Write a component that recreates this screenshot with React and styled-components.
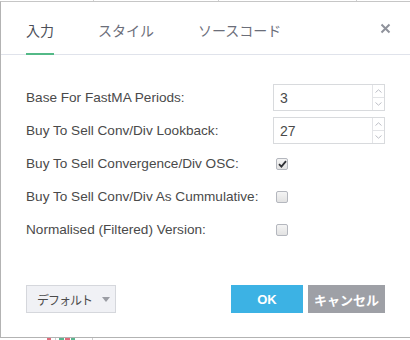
import React from 'react'
import styled, { createGlobalStyle } from 'styled-components'

const Global = createGlobalStyle`
  html, body {
    margin: 0;
    padding: 0;
    background: #fff;
    overflow: hidden;
  }
  body {
    font-family: "Liberation Sans", "Noto Sans CJK JP", sans-serif;
    color: #4a4a4a;
  }
`

const Page = styled.div`
  width: 410px;
  height: 340px;
  display: flex;
  flex-direction: column;
`

const Strip = styled.div`
  height: ${({ h }) => h}px;
  flex-shrink: 0;
  display: flex;
  align-items: stretch;
`

const Tick = styled.span`
  width: ${({ w }) => w || 1}px;
  margin-left: ${({ at }) => at}px;
  background: ${({ colour }) => colour};
`

const Dialog = styled.div`
  height: 338px;
  box-sizing: border-box;
  border-top: 1px solid #c6c6c6;
  border-left: 1px solid #b3b3b3;
  border-bottom: 1px solid #b3b3b3;
  display: flex;
  flex-direction: column;
`

const Header = styled.div`
  height: 52px;
  flex-shrink: 0;
  display: flex;
  align-items: stretch;
  padding: 0 19px 0 25px;
  border-bottom: 1px solid #e0e3eb;
`

const Tab = styled.div`
  position: relative;
  display: flex;
  align-items: center;
  padding-top: 3px;
  margin-right: 44px;
  font-family: "Noto Sans CJK JP", sans-serif;
  font-size: 14px;
  color: ${({ active }) => (active ? '#4c4f59' : '#6b6e79')};
  &::after {
    content: '';
    display: ${({ active }) => (active ? 'block' : 'none')};
    position: absolute;
    left: 0;
    right: 0;
    bottom: -1px;
    height: 2px;
    background: #53b987;
  }
`

const Close = styled.div`
  margin-left: auto;
  display: flex;
  align-items: center;
  padding-top: 1px;
`

const Body = styled.div`
  display: grid;
  grid-template-columns: 247px 112px;
  grid-auto-rows: 27px;
  row-gap: 6px;
  padding: 29px 25px 0 25px;
`

const Label = styled.div`
  display: flex;
  align-items: center;
  font-size: 13.6px;
  color: #4a4a4a;
  white-space: nowrap;
`

const Field = styled.div`
  display: flex;
  align-items: center;
`

const NumberBox = styled.div`
  width: 112px;
  height: 27px;
  box-sizing: border-box;
  border: 1px solid #d8dadd;
  display: flex;
`

const Value = styled.div`
  flex: 1;
  display: flex;
  align-items: center;
  padding-left: 6px;
  font-size: 14px;
  color: #4a4a4a;
`

const Spinner = styled.div`
  width: 11px;
  border-left: 1px solid #e3e4e7;
  display: flex;
  flex-direction: column;
`

const SpinHalf = styled.div`
  flex: 1;
  display: flex;
  align-items: center;
  justify-content: center;
  & + & {
    border-top: 1px solid #e3e4e7;
  }
`

const Check = styled.div`
  width: 12px;
  height: 12px;
  margin-left: 3px;
  box-sizing: border-box;
  border: 1px solid #b4b7be;
  border-radius: 2px;
  background: linear-gradient(#f4f4f4, #e2e2e2);
  display: flex;
  align-items: center;
  justify-content: center;
`

const Footer = styled.div`
  display: flex;
  align-items: center;
  margin-top: auto;
  padding: 0 25px 24px 25px;
`

const DefaultButton = styled.div`
  width: 90px;
  height: 28px;
  box-sizing: border-box;
  border: 1px solid #d5d7dc;
  background: #f0f1f5;
  display: flex;
  align-items: center;
  padding-left: 10px;
  font-family: "Noto Sans CJK JP", sans-serif;
  font-size: 12px;
  letter-spacing: -1px;
  white-space: nowrap;
  color: #4a4a4a;
`

const Caret = styled.span`
  margin-left: 10px;
  width: 0;
  height: 0;
  border-left: 4px solid transparent;
  border-right: 4px solid transparent;
  border-top: 5px solid #9b9da4;
`

const Actions = styled.div`
  margin-left: auto;
  display: flex;
  gap: 5px;
`

const Button = styled.div`
  width: ${({ w }) => w}px;
  height: 28px;
  background: ${({ colour }) => colour};
  color: #fff;
  font-weight: bold;
  font-size: 13px;
  font-family: "Liberation Sans", "Noto Sans CJK JP", sans-serif;
  white-space: nowrap;
  display: flex;
  align-items: center;
  justify-content: center;
`

const Arrow = ({ up }) =>
  <svg width="7" height="4" viewBox="0 0 7 4">
    <path d={up ? 'M0.5 3.5L3.5 0.8L6.5 3.5' : 'M0.5 0.5L3.5 3.2L6.5 0.5'} fill="none" stroke="#b5b8bf" strokeWidth="0.9" />
  </svg>

const NumberInput = ({ value }) =>
  <NumberBox>
    <Value>{value}</Value>
    <Spinner>
      <SpinHalf><Arrow up /></SpinHalf>
      <SpinHalf><Arrow /></SpinHalf>
    </Spinner>
  </NumberBox>

const Checkbox = ({ checked }) =>
  <Check>
    {checked &&
      <svg width="9" height="8" viewBox="0 0 9 8">
        <path d="M1 4.2L3.4 6.6L8 1.2" fill="none" stroke="#2f3136" strokeWidth="1.8" />
      </svg>}
  </Check>

const rows = [
  { label: 'Base For FastMA Periods:', value: '3' },
  { label: 'Buy To Sell Conv/Div Lookback:', value: '27' },
  { label: 'Buy To Sell Convergence/Div OSC:', checked: true },
  { label: 'Buy To Sell Conv/Div As Cummulative:', checked: false },
  { label: 'Normalised (Filtered) Version:', checked: false }
]

const App = () =>
  <Page>
    <Global />
    <Strip h={1}>
      <Tick at={93} colour="#d0d0d0" />
      <Tick at={124} colour="#d0d0d0" />
      <Tick at={137} colour="#d0d0d0" />
    </Strip>
    <Dialog>
      <Header>
        <Tab active>入力</Tab>
        <Tab>スタイル</Tab>
        <Tab>ソースコード</Tab>
        <Close>
          <svg width="11" height="11" viewBox="0 0 11 11">
            <path d="M1.5 1.5L9.5 9.5M9.5 1.5L1.5 9.5" stroke="#8f929b" strokeWidth="2" />
          </svg>
        </Close>
      </Header>
      <Body>
        {rows.map(row =>
          <React.Fragment key={row.label}>
            <Label>{row.label}</Label>
            <Field>
              {row.value !== undefined
                ? <NumberInput value={row.value} />
                : <Checkbox checked={row.checked} />}
            </Field>
          </React.Fragment>
        )}
      </Body>
      <Footer>
        <DefaultButton>
          デフォルト
          <Caret />
        </DefaultButton>
        <Actions>
          <Button w={72} colour="#3cb2e4">OK</Button>
          <Button w={77} colour="#9ea0a6">キャンセル</Button>
        </Actions>
      </Footer>
    </Dialog>
    <Strip h={2}>
      <Tick at={47} w={4} colour="#e06a7a" />
      <Tick at={4} colour="#cfcfcf" />
      <Tick at={3} w={5} colour="#5ab58e" />
      <Tick at={1} w={5} colour="#e06a7a" />
      <Tick at={1} w={4} colour="#5ab58e" />
      <Tick at={17} colour="#cfcfcf" />
    </Strip>
  </Page>

export default App
